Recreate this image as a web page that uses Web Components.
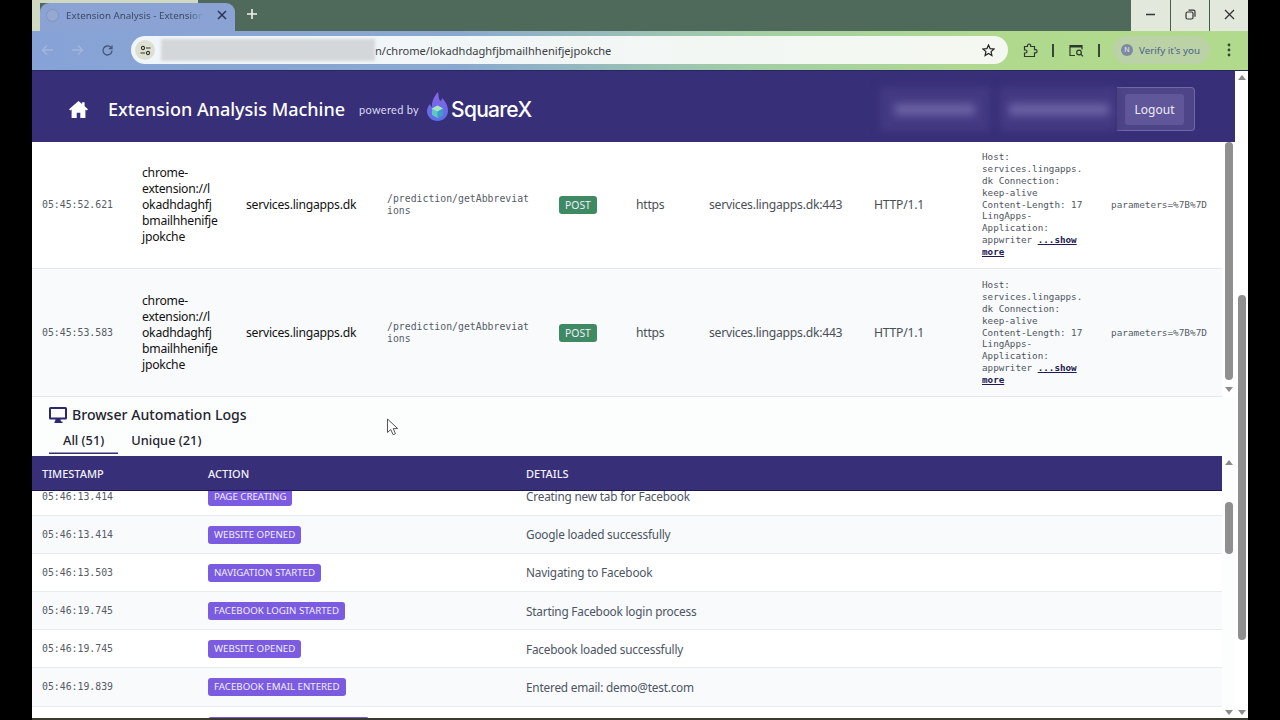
<!doctype html>
<html lang="en">
<head>
<meta charset="utf-8">
<title>Extension Analysis</title>
<style>
  html, body { margin: 0; height: 720px; overflow: hidden; background: #000; }
  body { font-family: "Noto Sans", sans-serif; }
</style>
</head>
<body>
<browser-window>
  <browser-chrome slot="chrome" url-tail="n/chrome/lokadhdaghfjbmailhhenifjejpokche"></browser-chrome>
  <app-header slot="header"></app-header>
  <request-panel slot="requests"></request-panel>
  <log-panel slot="logs"></log-panel>
</browser-window>

<script>
class BrowserWindow extends HTMLElement {
  constructor() {
    super();
    this.attachShadow({ mode: "open" });
    this.shadowRoot.innerHTML = `
      <style>
        :host {
          display: flex;
          flex-direction: column;
          position: relative;
          box-sizing: border-box;
          margin-left: 32px;
          width: 1216px;
          height: 720px;
          overflow: hidden;
          background: #fff;
          border-bottom: 2px solid #3a3a30;
        }
        .page { flex: 1; min-height: 0; display: flex; }
        main { flex: 1; min-width: 0; display: flex; flex-direction: column; }
        svg.cursor { position: absolute; left: 354px; top: 418px; }
      </style>
      <slot name="chrome"></slot>
      <div class="page">
        <main>
          <slot name="header"></slot>
          <slot name="requests"></slot>
          <slot name="logs"></slot>
        </main>
        <scroll-rail width="13" thumb-top="215" thumb-height="345" thumb-width="8" style="background:#fff"></scroll-rail>
      </div>
      <svg class="cursor" width="14" height="18" viewBox="0 0 14 18">
        <path d="M1.5 1v13.5l3.3-3 2.3 5.2 2.4-1-2.3-5.1h4.5z" fill="#fff" stroke="#555" stroke-width="1"/>
      </svg>
    `;
  }
}
customElements.define("browser-window", BrowserWindow);

class ScrollRail extends HTMLElement {
  constructor() {
    super();
    this.attachShadow({ mode: "open" });
  }
  connectedCallback() {
    const width = this.getAttribute("width");
    const top = this.getAttribute("thumb-top");
    const height = this.getAttribute("thumb-height");
    const thumb = this.getAttribute("thumb-width");
    this.shadowRoot.innerHTML = `
      <style>
        :host {
          flex: none;
          display: flex;
          flex-direction: column;
          align-items: center;
          box-sizing: border-box;
          width: ${width}px;
          padding: 4px 0 3px;
        }
        .up, .down { flex: none; width: 0; height: 0; border: 4px solid transparent; }
        .up { border-top: 0; border-bottom: 5px solid #8b8b8b; }
        .down { border-bottom: 0; border-top: 5px solid #8b8b8b; }
        :host([no-up]) .up { visibility: hidden; }
        .track { flex: 1; min-height: 0; width: 100%; display: flex; justify-content: center; }
        .thumb {
          margin-top: ${top}px;
          width: ${thumb}px;
          height: ${height}px;
          border-radius: 4px;
          background: #8f8f8f;
        }
      </style>
      <div class="up"></div>
      <div class="track"><div class="thumb"></div></div>
      <div class="down"></div>
    `;
  }
}
customElements.define("scroll-rail", ScrollRail);

class BrowserChrome extends HTMLElement {
  constructor() {
    super();
    this.attachShadow({ mode: "open" });
    this.shadowRoot.innerHTML = `
      <style>
        :host {
          display: block;
          flex: none;
          font-family: "Noto Sans", sans-serif;
          font-size: 11.5px;
        }
        .strip {
          height: 31px;
          display: flex;
          background: linear-gradient(#cfd8c0, #cfd8c0) 0 0 / 166px 3px no-repeat, #4f6a5a;
        }
        .lead { width: 8px; background: #cfd8c0; }
        .tab {
          box-sizing: border-box;
          width: 195px;
          margin-top: 3px;
          padding: 0 0 4px 6px;
          display: flex;
          align-items: center;
          gap: 7px;
          border-radius: 9px 9px 0 0;
          background: #8aa3d4;
          color: #3e4a63;
        }
        .fav { width: 13px; height: 13px; border-radius: 50%; background: #95a8cf; border: 1px solid #8095c0; box-sizing: border-box; flex: none; }
        .tab-title {
          flex: 1;
          white-space: nowrap;
          overflow: hidden;
          font-size: 9.8px;
          -webkit-mask-image: linear-gradient(90deg, #000 90%, transparent);
        }
        .tab svg { flex: none; margin: 0 8px 0 7px; }
        .new { margin: 8px 0 0 11px; width: 12px; height: 12px; }
        .spacer { flex: 1; }
        .win { display: flex; background: #e3e8dc; }
        .win div { width: 39px; display: flex; align-items: center; justify-content: center; border-left: 1px solid #4a5a4c; padding-bottom: 2px; box-sizing: border-box; }
        .win div:first-child { border-left: 0; }
        .bar {
          box-sizing: border-box;
          height: 40px;
          padding: 5px 0 6px 0;
          display: flex;
          align-items: center;
          background: linear-gradient(90deg, #87a2d6 0, #8aa8cf 35%, #a4cfa4 60%, #b1d98e 80%, #b2da8c 100%);
          border-bottom: 1px solid #2a2560;
        }
        .nav { display: flex; align-items: center; gap: 17px; padding-left: 9px; width: 99px; box-sizing: border-box; }
        .omni {
          width: 877px;
          height: 28px;
          box-sizing: border-box;
          display: flex;
          align-items: center;
          border-radius: 14px;
          background: linear-gradient(90deg, #f0f5fb, #f4f8f0);
          color: #3c4043;
          font-size: 11.1px;
          position: relative;
        }
        .tune { width: 20px; height: 20px; margin-left: 4px; border-radius: 50%; background: #dde0cf; display: flex; align-items: center; justify-content: center; flex: none; }
        .blur { width: 214px; height: 22px; margin-left: 6px; flex: none; background: #d4d7d9; filter: blur(1.5px); }
        .tail { flex: 1; white-space: nowrap; }
        .omni svg.star { margin-right: 13px; flex: none; }
        .tools { flex: 1; display: flex; align-items: center; }
        .sep { width: 2px; height: 13px; background: #34473a; flex: none; }
        .pill {
          margin-left: 13px;
          width: 97px;
          height: 28px;
          box-sizing: border-box;
          padding-left: 8px;
          display: flex;
          align-items: center;
          gap: 6px;
          border-radius: 14px;
          background: #bbd2a7;
          color: #4a6283;
          font-size: 9.8px;
          white-space: nowrap;
        }
        .n { width: 12px; height: 12px; border-radius: 50%; background: #7d8aa2; color: #e9edf2; font-size: 7px; line-height: 12px; text-align: center; flex: none; }
      </style>
      <div class="strip">
        <div class="lead"></div>
        <div class="tab">
          <span class="fav"></span>
          <span class="tab-title">Extension Analysis - Extension Analysis</span>
          <svg width="10" height="10" viewBox="0 0 10 10"><path d="M1 1l8 8M9 1l-8 8" stroke="#2b3550" stroke-width="1.5"/></svg>
        </div>
        <svg class="new" viewBox="0 0 12 12"><path d="M6 1v10M1 6h10" stroke="#eef2ee" stroke-width="1.6"/></svg>
        <div class="spacer"></div>
        <div class="win">
          <div><svg width="11" height="3" viewBox="0 0 11 3"><path d="M1 1.5h9" stroke="#333" stroke-width="1.5"/></svg></div>
          <div><svg width="11" height="11" viewBox="0 0 11 11"><rect x="1" y="3" width="7" height="7" rx="1.5" fill="none" stroke="#333" stroke-width="1.2"/><path d="M3.5 1.2h5a1.5 1.5 0 0 1 1.5 1.5v5" fill="none" stroke="#333" stroke-width="1.2"/></svg></div>
          <div><svg width="11" height="11" viewBox="0 0 11 11"><path d="M1 1l9 9M10 1l-9 9" stroke="#333" stroke-width="1.3"/></svg></div>
        </div>
      </div>
      <div class="bar">
        <div class="nav">
          <svg width="13" height="12" viewBox="0 0 13 12"><path d="M12 6H2M6 1.5L1.5 6 6 10.5" fill="none" stroke="#a3b6dd" stroke-width="1.3"/></svg>
          <svg width="13" height="12" viewBox="0 0 13 12"><path d="M1 6h10M7 1.5L11.5 6 7 10.5" fill="none" stroke="#a3b6dd" stroke-width="1.3"/></svg>
          <svg width="13" height="13" viewBox="0 0 13 13"><path d="M11 6.5A4.5 4.5 0 1 1 9.6 3.2L11 4.6M11 1.5v3.2H7.8" fill="none" stroke="#44567a" stroke-width="1.3"/></svg>
        </div>
        <div class="omni">
          <span class="tune"><svg width="11" height="11" viewBox="0 0 11 11"><g fill="none" stroke="#333" stroke-width="1.1"><circle cx="3" cy="3" r="1.6"/><path d="M6 3h4.5M.5 8H5"/><circle cx="8" cy="8" r="1.6"/></g></svg></span>
          <span class="blur"></span>
          <span class="tail" id="tail"></span>
          <svg class="star" width="13" height="13" viewBox="0 0 13 13"><path d="M6.5 1l1.6 3.6 3.9.4-2.9 2.6.8 3.9-3.4-2-3.4 2 .8-3.9L1 5l3.9-.4z" fill="none" stroke="#222" stroke-width="1.2"/></svg>
        </div>
        <div class="tools">
          <svg style="margin-left:15px" width="15" height="15" viewBox="0 0 15 15"><path d="M1.5 3.5h3V2.6a1.6 1.6 0 0 1 3.2 0v.9h3.8v3.1h1a1.6 1.6 0 0 1 0 3.2h-1v3.7h-10V10h1a1.5 1.5 0 0 0 0-3h-1z" fill="none" stroke="#2b3a30" stroke-width="1.2"/></svg>
          <span class="sep" style="margin-left:14px"></span>
          <svg style="margin-left:15px" width="15" height="13" viewBox="0 0 15 13"><path d="M6 11.5H1V1.5h12v4" fill="none" stroke="#2b3a30" stroke-width="1.2"/><path d="M1 1.5h12v2H1z" fill="#2b3a30"/><circle cx="10" cy="8.5" r="2.3" fill="none" stroke="#2b3a30" stroke-width="1.2"/><path d="M11.7 10.2L14 12.4" stroke="#2b3a30" stroke-width="1.2"/></svg>
          <span class="sep" style="margin-left:14px"></span>
          <div class="pill"><span class="n">N</span><span>Verify it's you</span></div>
          <svg style="margin-left:17px" width="4" height="14" viewBox="0 0 4 14"><g fill="#2f4a38"><circle cx="2" cy="2" r="1.4"/><circle cx="2" cy="7" r="1.4"/><circle cx="2" cy="12" r="1.4"/></g></svg>
        </div>
      </div>
    `;
  }
  connectedCallback() {
    this.shadowRoot.querySelector("#tail").textContent = this.getAttribute("url-tail");
  }
}
customElements.define("browser-chrome", BrowserChrome);

class AppHeader extends HTMLElement {
  constructor() {
    super();
    this.attachShadow({ mode: "open" });
    this.shadowRoot.innerHTML = `
      <style>
        :host {
          flex: none;
          display: flex;
          align-items: center;
          box-sizing: border-box;
          height: 71px;
          padding: 5px 40px 0 37px;
          background: #372f78;
          color: #fff;
        }
        svg.home { flex: none; }
        h1 {
          margin: 0 0 0 20px;
          font: 500 18px "Noto Sans", sans-serif;
          white-space: nowrap;
        }
        .by { margin-left: 14px; font: 400 11px Lato, sans-serif; color: #dcd9f2; letter-spacing: .3px; white-space: nowrap; }
        svg.flame { margin: -4px 0 0 8px; flex: none; }
        .brand { margin-left: 3px; font: 500 21px Inter, sans-serif; letter-spacing: -.7px; white-space: nowrap; }
        .spacer { flex: 1; }
        .smear { height: 44px; background: #433a83; display: flex; align-items: center; justify-content: center; filter: blur(4px); flex: none; }
        .smear i { display: block; height: 11px; background: #6c64a6; }
        .box {
          flex: none;
          display: flex;
          align-items: center;
          box-sizing: border-box;
          width: 78px;
          height: 44px;
          padding-left: 8px;
          border: 1px solid #6f69ab;
          border-left: 0;
          border-radius: 0 4px 4px 0;
          background: #4d4587;
        }
        button {
          all: unset;
          box-sizing: border-box;
          width: 59px;
          height: 31px;
          border-radius: 3px;
          background: #5f5799;
          color: #eeecf8;
          font: 400 12px "Noto Sans", sans-serif;
          text-align: center;
          line-height: 31px;
        }
      </style>
      <svg class="home" width="19" height="17" viewBox="0 0 19 17">
        <path d="M9.5 0L0 8.3l1.2 1.3L2.6 8.4V17h5.1v-5.2h3.6V17h5.1V8.4l1.4 1.2L19 8.3 15.6 5.3V1.2h-2.5v1.9z" fill="#fff"/>
      </svg>
      <h1>Extension Analysis Machine</h1>
      <span class="by">powered by</span>
      <svg class="flame" width="21" height="30" viewBox="0 0 21 30">
        <defs>
          <linearGradient id="fl" x1="0" y1="0" x2="0" y2="1">
            <stop offset="0" stop-color="#8a63e8"/>
            <stop offset="1" stop-color="#5a6fe6"/>
          </linearGradient>
        </defs>
        <path d="M11 0c1 4 0 6 2.500 9 1-.5 1.500-2 1.500-3 3.500 3.500 6 7.500 6 12.500C21 25 16 29 10.500 29S0 25 0 19c0-3 1.500-5 3-7 .5 1.500 1 2.500 2 3C4.500 9 7.500 4 11 0z" fill="url(#fl)"/>
        <path d="M10.500 13.500l5.500 3v6.500l-5.500 3-5.500-3v-6.500z" fill="#5fc7c4"/>
        <path d="M10.500 13.500l5.500 3-5.500 3-5.500-3z" fill="#a9e6c4"/>
        <path d="M10.500 19.500l5.500-3v6.500l-5.500 3z" fill="#3f9ec4"/>
      </svg>
      <span class="brand">SquareX</span>
      <div class="spacer"></div>
      <div class="smear" style="width:110px; margin-right:10px"><i style="width:80px"></i></div>
      <div class="smear" style="width:117px"><i style="width:100px"></i></div>
      <div class="box"><button>Logout</button></div>
    `;
  }
}
customElements.define("app-header", AppHeader);

class MethodBadge extends HTMLElement {
  constructor() {
    super();
    this.attachShadow({ mode: "open" });
    this.shadowRoot.innerHTML = `
      <style>
        :host {
          display: inline-block;
          box-sizing: border-box;
          height: 18px;
          padding: 0 6px;
          border-radius: 3px;
          background: var(--badge-bg, #7b5be0);
          color: #f1edfd;
          font: 400 9.700px/18px "Noto Sans", sans-serif;
          text-transform: uppercase;
          white-space: nowrap;
        }
      </style>
      <slot></slot>
    `;
  }
}
customElements.define("method-badge", MethodBadge);

class RequestRow extends HTMLElement {
  constructor() {
    super();
    this.attachShadow({ mode: "open" });
    this.shadowRoot.innerHTML = `
      <style>
        :host {
          display: grid;
          grid-template-columns: 100px 104px 141px 172px 77px 73px 165px 108px 129px 1fr;
          align-items: center;
          box-sizing: border-box;
          height: 128px;
          padding-left: 10px;
          border-bottom: 1px solid #e5e8eb;
          background: var(--row-bg, #fff);
          color: #111;
          font: 400 12.200px/16px "Noto Sans", sans-serif;
          letter-spacing: -.25px;
        }
        .mono { font: 400 9.840px/12px "DejaVu Sans Mono", monospace; color: #555c66; letter-spacing: 0; }
        .init { white-space: pre-line; }
        .path { width: 144px; word-break: break-all; }
        .head { width: 101px; color: #4e5560; overflow-wrap: anywhere; font-size: 9.250px; line-height: 11.900px; }
        #params { font-size: 9.400px; }
        a { color: #1e1a52; font-weight: 700; }
        .dim { color: #4a4f57; }
        method-badge {
          justify-self: start;
          padding: 0 6px;
          font-size: 10.400px;
          letter-spacing: 0;
          --badge-bg: #3f8a63;
        }
      </style>
      <span class="mono" id="time"></span>
      <span class="init" id="init"></span>
      <span id="host"></span>
      <span class="mono path" id="path"></span>
      <method-badge id="method"></method-badge>
      <span class="dim" id="scheme"></span>
      <span class="dim" id="port"></span>
      <span class="dim" id="proto"></span>
      <span class="mono head"><span id="headers"></span> <a href="#">...show more</a></span>
      <span class="mono" id="params"></span>
    `;
  }

  set data(row) {
    for (const key of Object.keys(row)) {
      this.shadowRoot.querySelector(`#${key}`).textContent = row[key];
    }
  }
}
customElements.define("request-row", RequestRow);

const REQUEST = {
  init: "chrome-\nextension://l\nokadhdaghfj\nbmailhhenifje\njpokche",
  host: "services.lingapps.dk",
  path: "/prediction/getAbbreviations",
  method: "POST",
  scheme: "https",
  port: "services.lingapps.dk:443",
  proto: "HTTP/1.1",
  headers: "Host: services.lingapps.dk Connection: keep-alive Content-Length: 17 LingApps-Application: appwriter",
  params: "parameters=%7B%7D",
};

class RequestPanel extends HTMLElement {
  constructor() {
    super();
    this.attachShadow({ mode: "open" });
    this.shadowRoot.innerHTML = `
      <style>
        :host { flex: none; display: flex; height: 255px; overflow: hidden; background: #fff; }
        .rows { flex: 1; min-width: 0; overflow: hidden; }
        #list { margin-top: -1px; }
        request-row:nth-child(even) { --row-bg: #f8fafb; }
        scroll-rail { padding-bottom: 5px; }
      </style>
      <div class="rows"><div id="list"></div></div>
      <scroll-rail no-up width="13" thumb-top="-9" thumb-height="238" thumb-width="8"></scroll-rail>
    `;
  }
  connectedCallback() {
    const list = this.shadowRoot.querySelector("#list");
    for (const time of ["05:45:52.621", "05:45:53.583"]) {
      const row = document.createElement("request-row");
      list.appendChild(row);
      row.data = { ...REQUEST, time };
    }
  }
}
customElements.define("request-panel", RequestPanel);

class LogRow extends HTMLElement {
  constructor() {
    super();
    this.attachShadow({ mode: "open" });
    this.shadowRoot.innerHTML = `
      <style>
        :host {
          display: grid;
          grid-template-columns: 166px 318px 1fr;
          align-items: center;
          box-sizing: border-box;
          height: 38.200px;
          padding-left: 10px;
          border-bottom: 1px solid #e8ebee;
          background: var(--row-bg, #fff);
          color: #4b5563;
          font: 400 11.800px "Noto Sans", sans-serif;
          letter-spacing: -.2px;
        }
        .mono { font: 400 9.840px "DejaVu Sans Mono", monospace; color: #555c66; letter-spacing: 0; }
        method-badge { justify-self: start; letter-spacing: 0; margin-top: 1px; }
      </style>
      <span class="mono" id="time"></span>
      <method-badge id="action"></method-badge>
      <span id="details"></span>
    `;
  }

  set data(row) {
    for (const key of Object.keys(row)) {
      this.shadowRoot.querySelector(`#${key}`).textContent = row[key];
    }
  }
}
customElements.define("log-row", LogRow);

const LOGS = [
  { time: "05:46:13.414", action: "Page creating", details: "Creating new tab for Facebook" },
  { time: "05:46:13.414", action: "Website opened", details: "Google loaded successfully" },
  { time: "05:46:13.503", action: "Navigation started", details: "Navigating to Facebook" },
  { time: "05:46:19.745", action: "Facebook login started", details: "Starting Facebook login process" },
  { time: "05:46:19.745", action: "Website opened", details: "Facebook loaded successfully" },
  { time: "05:46:19.839", action: "Facebook email entered", details: "Entered email: demo@test.com" },
  { time: "05:46:20.112", action: "Facebook password entered", details: "Entered password" },
];

class LogPanel extends HTMLElement {
  constructor() {
    super();
    this.attachShadow({ mode: "open" });
    this.shadowRoot.innerHTML = `
      <style>
        :host {
          flex: 1;
          min-height: 0;
          display: flex;
          flex-direction: column;
          background: #fcfdfd;
          color: #1f2430;
          font-family: "Noto Sans", sans-serif;
        }
        header { flex: none; height: 59px; box-sizing: border-box; padding: 8px 0 0 17px; }
        h2 { margin: 0; display: flex; align-items: center; gap: 5px; font: 500 14.100px/19px "Noto Sans", sans-serif; }
        nav { display: flex; margin-top: 7px; font: 500 12.800px/19px "Noto Sans", sans-serif; }
        nav span { padding: 0 14px 4px; }
        nav span + span { margin-left: -1px; }
        nav .on { box-shadow: inset 0 -1.500px 0 #372f78; }
        .wrap { flex: 1; min-height: 0; display: flex; }
        .table { flex: 1; min-width: 0; display: flex; flex-direction: column; }
        .thead {
          flex: none;
          display: grid;
          grid-template-columns: 166px 318px 1fr;
          align-items: center;
          box-sizing: border-box;
          height: 35px;
          padding-left: 10px;
          background: #372f78;
          border-bottom: 1px solid #1c1850;
          color: #f2f1fa;
          font: 500 11px "Noto Sans", sans-serif;
        }
        .tbody { flex: 1; min-height: 0; overflow: hidden; }
        #list { margin-top: -13.600px; }
        log-row:nth-child(even) { --row-bg: #f8fafb; }
      </style>
      <header>
        <h2>
          <svg width="18" height="16" viewBox="0 0 18 16"><path d="M1.500 0h15A1.500 1.500 0 0 1 18 1.500v9.500a1.500 1.500 0 0 1-1.500 1.500h-5l.5 2h1.500v1.500h-8V14.500H6l.5-2h-5A1.500 1.500 0 0 1 0 11V1.500A1.500 1.500 0 0 1 1.500 0zM2 2v8.500h14V2z" fill="#2d2869"/></svg>
          <span>Browser Automation Logs</span>
        </h2>
        <nav><span class="on">All (51)</span><span>Unique (21)</span></nav>
      </header>
      <div class="wrap">
        <div class="table">
          <div class="thead"><span>TIMESTAMP</span><span>ACTION</span><span>DETAILS</span></div>
          <div class="tbody"><div id="list"></div></div>
        </div>
        <scroll-rail width="13" thumb-top="37" thumb-height="52" thumb-width="8"></scroll-rail>
      </div>
    `;
  }
  connectedCallback() {
    const list = this.shadowRoot.querySelector("#list");
    for (const log of LOGS) {
      const row = document.createElement("log-row");
      list.appendChild(row);
      row.data = log;
    }
  }
}
customElements.define("log-panel", LogPanel);
</script>
</body>
</html>
